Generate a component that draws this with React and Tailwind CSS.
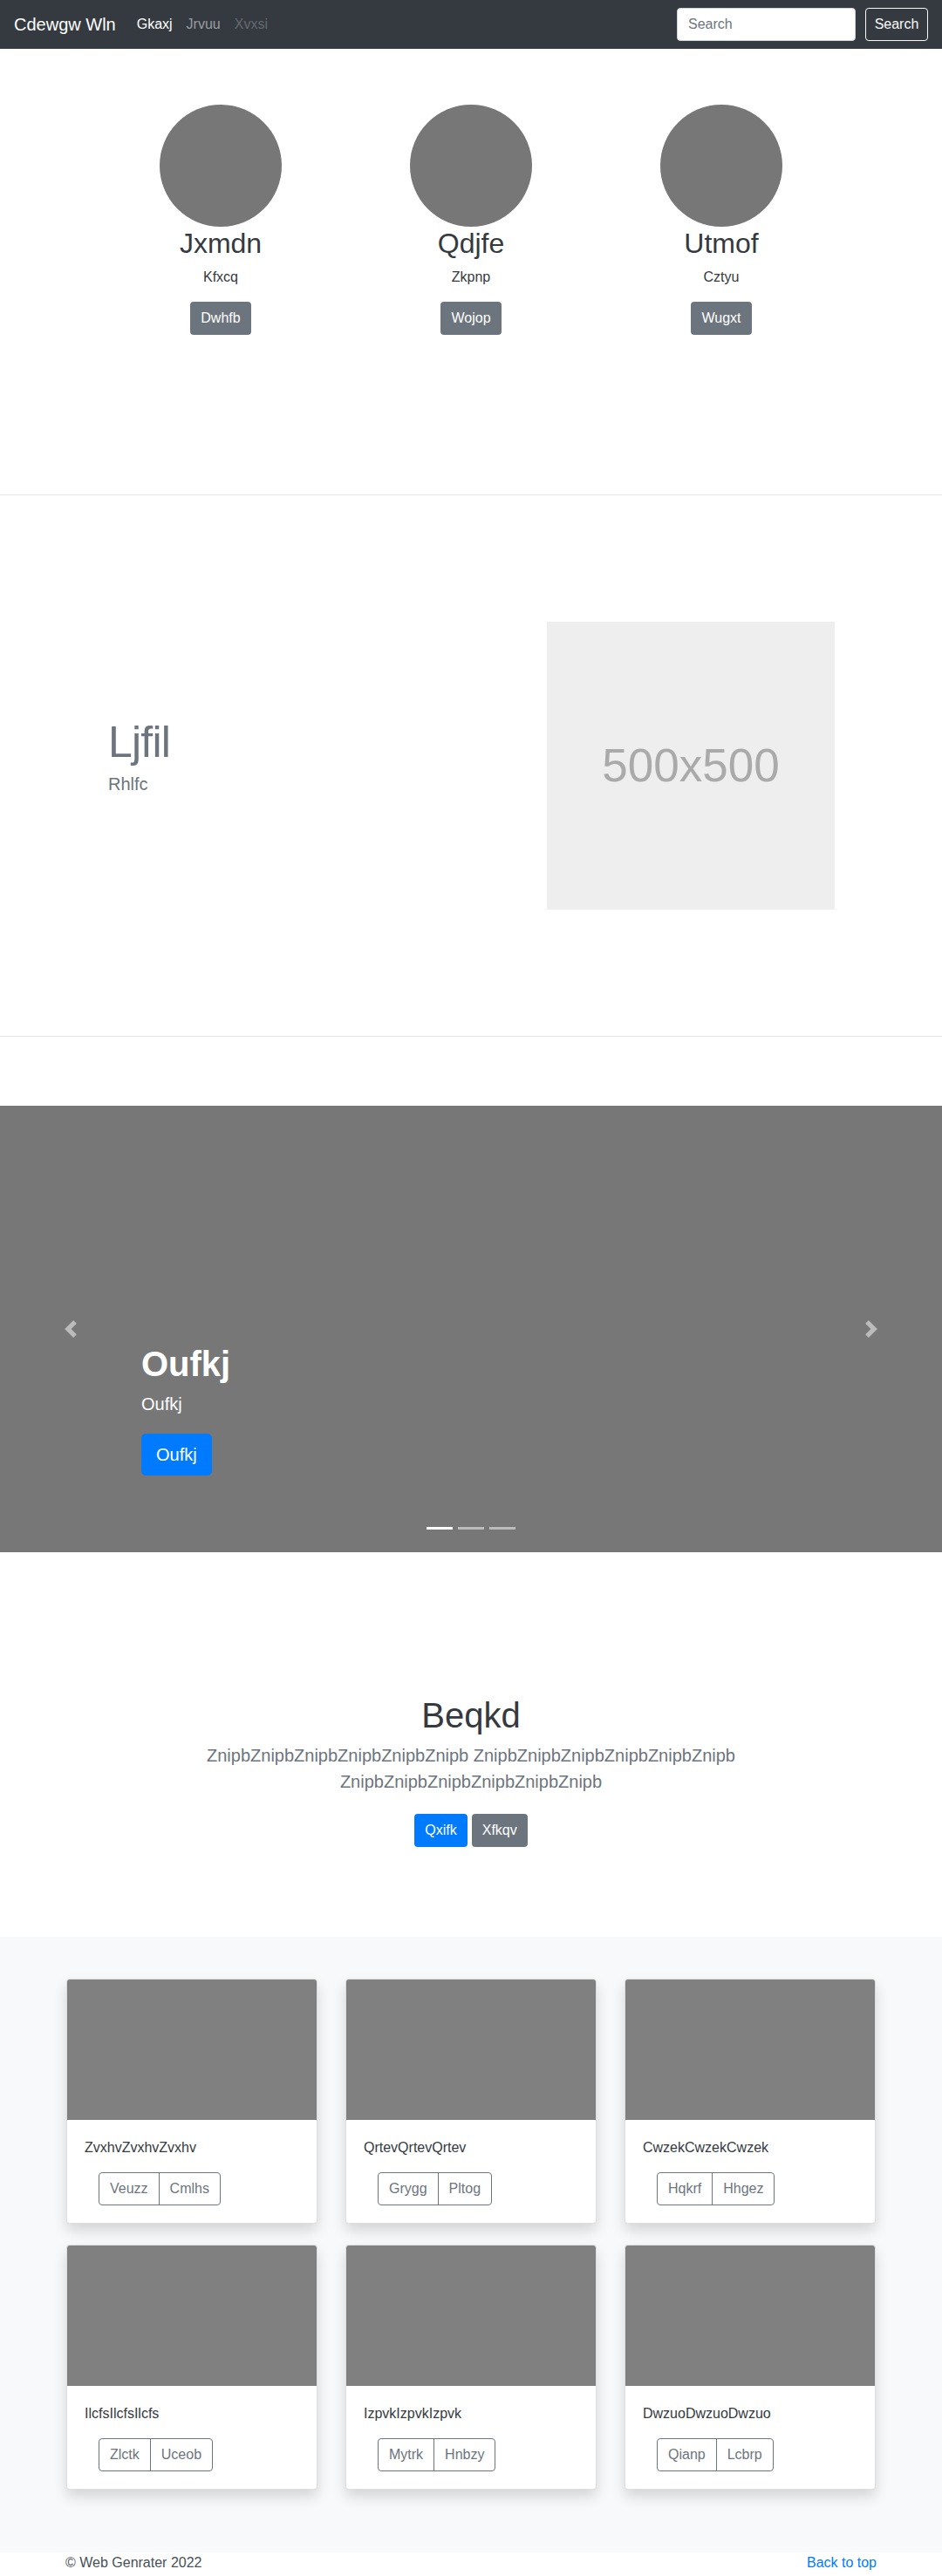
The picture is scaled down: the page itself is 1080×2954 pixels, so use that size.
import React from 'react';

const team = [
  { name: 'Jxmdn', role: 'Kfxcq', action: 'Dwhfb' },
  { name: 'Qdjfe', role: 'Zkpnp', action: 'Wojop' },
  { name: 'Utmof', role: 'Cztyu', action: 'Wugxt' },
];

const cards = [
  { title: 'ZvxhvZvxhvZvxhv', buttons: ['Veuzz', 'Cmlhs'] },
  { title: 'QrtevQrtevQrtev', buttons: ['Grygg', 'Pltog'] },
  { title: 'CwzekCwzekCwzek', buttons: ['Hqkrf', 'Hhgez'] },
  { title: 'IlcfsIlcfsIlcfs', buttons: ['Zlctk', 'Uceob'] },
  { title: 'IzpvkIzpvkIzpvk', buttons: ['Mytrk', 'Hnbzy'] },
  { title: 'DwzuoDwzuoDwzuo', buttons: ['Qianp', 'Lcbrp'] },
];

const Navbar = () => (
  <nav className="h-14 bg-[#343a40] flex items-center justify-between px-4">
    <div className="flex items-center">
      <a href="#" className="text-[20px] leading-[30px] text-white mr-4">Cdewgw Wln</a>
      <a href="#" className="px-2 text-white">Gkaxj</a>
      <a href="#" className="px-2 text-white/50">Jrvuu</a>
      <a href="#" className="px-2 text-white/25">Xvxsi</a>
    </div>
    <form className="flex items-center" onSubmit={(e) => e.preventDefault()}>
      <input
        type="text"
        placeholder="Search"
        className="w-[205px] h-[38px] px-3 bg-white border border-[#ced4da] rounded-[4px] text-[16px] text-[#495057] placeholder:text-[#6c757d] mr-[11px] outline-none"
      />
      <button className="h-[38px] w-[72px] border border-[#f8f9fa] text-[#f8f9fa] rounded-[4px] text-[16px]">
        Search
      </button>
    </form>
  </nav>
);

const Team = () => (
  <section className="pt-16 pb-[183px]">
    <div className="w-[861px] mx-auto grid grid-cols-3">
      {team.map((m) => (
        <div key={m.name} className="flex flex-col items-center text-center">
          <div className="w-[140px] h-[140px] rounded-full bg-[#777]" />
          <h2 className="text-[32px] leading-[38px] text-[#343a40] mb-2">{m.name}</h2>
          <p className="text-[16px] leading-6 text-[#343a40] mb-4">{m.role}</p>
          <a href="#" className="h-[38px] px-3 flex items-center bg-[#6c757d] text-white rounded-[4px]">{m.action}</a>
        </div>
      ))}
    </div>
  </section>
);

const Featurette = () => (
  <section className="py-[145px]">
    <div className="w-[960px] mx-auto flex items-center">
      <div className="w-[567px] pl-16">
        <h2 className="text-[50px] leading-none font-light tracking-[-0.8px] text-[#6c757d] mb-2">Ljfil</h2>
        <p className="text-[20px] leading-[30px] font-light text-[#6c757d] mb-4">Rhlfc</p>
      </div>
      <div className="w-[330px] h-[330px] bg-[#eee] flex items-center justify-center">
        <span className="text-[53px] text-[#aaa]">500x500</span>
      </div>
    </div>
  </section>
);

const Carousel = () => (
  <div className="relative h-[512px] bg-[#777] mt-[79px]">
    <button className="absolute left-0 top-0 h-full w-[162px] flex items-center justify-center opacity-50">
      <svg width="20" height="20" viewBox="0 0 8 8" fill="#fff">
        <path d="M5.25 0l-4 4 4 4 1.5-1.5-2.5-2.5 2.5-2.5-1.5-1.5z" />
      </svg>
    </button>
    <button className="absolute right-0 top-0 h-full w-[162px] flex items-center justify-center opacity-50">
      <svg width="20" height="20" viewBox="0 0 8 8" fill="#fff">
        <path d="M2.75 0l-1.5 1.5 2.5 2.5-2.5 2.5 1.5 1.5 4-4-4-4z" />
      </svg>
    </button>
    <div className="absolute left-[162px] right-[162px] bottom-12 pt-5 pb-10 text-white">
      <h1 className="text-[40px] leading-[48px] font-bold mb-2">Oufkj</h1>
      <p className="text-[20px] leading-[28px] mb-5">Oufkj</p>
      <a href="#" className="inline-block h-[48px] px-4 leading-[46px] text-[20px] bg-[#007bff] border border-[#007bff] rounded-[5px] text-white">Oufkj</a>
    </div>
    <div className="absolute bottom-[26px] left-0 right-0 flex justify-center gap-[6px]">
      <span className="w-[30px] h-[3px] bg-white" />
      <span className="w-[30px] h-[3px] bg-white/50" />
      <span className="w-[30px] h-[3px] bg-white/50" />
    </div>
  </div>
);

const Jumbotron = () => (
  <section className="pt-[163px] pb-[103px] text-center">
    <div className="max-w-[640px] mx-auto px-[15px]">
      <h1 className="text-[40px] leading-[48px] font-light text-[#343a40] mb-[7px]">Beqkd</h1>
      <p className="text-[20px] leading-[30px] font-light text-[#6c757d]">
        ZnipbZnipbZnipbZnipbZnipbZnipb ZnipbZnipbZnipbZnipbZnipbZnipb
        <br />
        ZnipbZnipbZnipbZnipbZnipbZnipb
      </p>
      <div className="mt-[22px] flex justify-center gap-[5px]">
        <a href="#" className="h-[38px] px-3 flex items-center bg-[#007bff] text-white rounded-[4px]">Qxifk</a>
        <a href="#" className="h-[38px] px-3 flex items-center bg-[#6c757d] text-white rounded-[4px]">Xfkqv</a>
      </div>
    </div>
  </section>
);

const Album = () => (
  <section className="bg-[#f8f9fa] pt-12 pb-[72px]">
    <div className="w-[928px] mx-auto grid grid-cols-3 gap-x-8 gap-y-6">
      {cards.map((card) => (
        <div
          key={card.title}
          className="bg-white border border-black/[0.125] rounded-[4px] overflow-hidden shadow-[0_8px_16px_rgba(0,0,0,0.15)]"
        >
          <div className="h-[161px] bg-[#808080]" />
          <div className="p-5">
            <p className="text-[16px] leading-6 text-[#343a40] mb-4">{card.title}</p>
            <div className="ml-4 inline-flex border border-[#6c757d] rounded-[4px] overflow-hidden">
              {card.buttons.map((b, i) => (
                <button
                  key={b}
                  className={i === 0 ? 'h-[36px] px-3 text-[16px] text-[#6c757d] border-r border-[#6c757d]' : 'h-[36px] px-3 text-[16px] text-[#6c757d]'}
                >
                  {b}
                </button>
              ))}
            </div>
          </div>
        </div>
      ))}
    </div>
  </section>
);

const Footer = () => (
  <footer className="w-[960px] mx-auto px-[15px] flex justify-between text-[16px] leading-6 text-[#495057] pb-4">
    <p>© Web Genrater 2022</p>
    <a href="#" className="text-[#007bff]">Back to top</a>
  </footer>
);

export default function App() {
  return (
    <div className="font-['Liberation_Sans',Arial,sans-serif] text-[16px] text-[#212529] bg-white">
      <Navbar />
      <Team />
      <hr className="border-0 border-t border-black/10 m-0" />
      <Featurette />
      <hr className="border-0 border-t border-black/10 m-0" />
      <Carousel />
      <Jumbotron />
      <Album />
      <Footer />
    </div>
  );
}
